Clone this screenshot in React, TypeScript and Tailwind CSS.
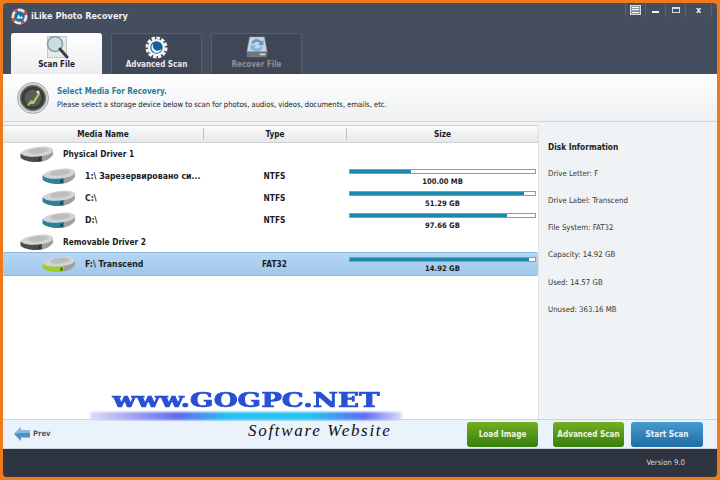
const font = 'font-["DejaVu_Sans_Condensed","DejaVu_Sans",sans-serif] [font-stretch:condensed]'

function DriveIcon({ color, dark }: { color: string; dark: string }) {
  return (
    <svg width="33" height="16" viewBox="0 0 33 16" className="shrink-0">
      <path d="M0.5 7 C4 3 12 1.5 20 0.7 C27 0 33 1.5 33 4 C33 7 28 9 22 10 C13 11.5 3 11 0.5 7 Z" fill="#d2d3d4" />
      <ellipse cx="18" cy="4.8" rx="10" ry="2.8" fill="#bcbdbe" transform="rotate(-6 18 4.8)" />
      <path d="M0.5 7 C3 11 13 11.5 22 10 L22 15.5 C14 17 4 15.5 0.5 11.5 Z" fill={color} />
      <path d="M22 10 C28 9 33 7 33 4 L33 8.5 C32 11.5 27 14.5 22 15.5 Z" fill="#9b9d9f" />
      <rect x="18.5" y="11.5" width="2" height="3.5" fill={dark} />
    </svg>
  )
}

function TabMagnifier() {
  return (
    <svg width="24" height="23" viewBox="0 0 24 23">
      <rect x="2.5" y="0.5" width="19" height="21" fill="#e6e8e8" stroke="#c4c8c8" />
      <circle cx="10" cy="8" r="7.5" fill="#c6dde3" stroke="#8b9a9f" strokeWidth="1.5" />
      <path d="M15 13 L22 21" stroke="#3c3f42" strokeWidth="3" strokeLinecap="round" />
    </svg>
  )
}

function TabGear() {
  return (
    <svg width="23" height="23" viewBox="0 0 24 24">
      <circle cx="12" cy="12" r="10" fill="none" stroke="#f2f4f6" strokeWidth="3" strokeDasharray="3.6 1.6" />
      <circle cx="12" cy="12" r="9" fill="#f2f4f6" />
      <circle cx="12" cy="12" r="6.5" fill="#12609c" />
      <path d="M9 7.5 A5.5 5.5 0 1 0 17.5 13 A4.5 4.5 0 0 1 9 7.5 Z" fill="#eaf3f8" />
    </svg>
  )
}

function TabRecover() {
  return (
    <svg width="22" height="23" viewBox="0 0 24 25">
      <path d="M4 1 H20 L23 17 H1 Z" fill="#c9d6df" stroke="#8f98a0" strokeWidth="0.6" />
      <path d="M6 8 A6 6 0 0 1 17 6 L19 4 L19 10 L13 10 L15 8 A4 4 0 0 0 8 9 Z" fill="#5f9bd0" />
      <path d="M18 11 A6 6 0 0 1 7 14 L5 16 L5 10 L11 10 L9 12 A4 4 0 0 0 16 11 Z" fill="#7fb2dd" />
      <rect x="1" y="17" width="22" height="6" rx="1" fill="#70767d" />
      <rect x="15" y="19" width="6" height="2" fill="#d6d9dc" />
    </svg>
  )
}

function AppLogo() {
  return (
    <svg width="17" height="17" viewBox="0 0 18 18">
      <circle cx="9" cy="9" r="8.5" fill="#e9e3dd" />
      <path d="M3 3 A8.5 8.5 0 0 1 7 1 L8 4 L5 5 Z M15 15 A8.5 8.5 0 0 1 11 17 L10 14 L13 13 Z" fill="#c8472f" />
      <path d="M15 3 A8.5 8.5 0 0 1 17 7 L14 8 L13 5 Z M3 15 A8.5 8.5 0 0 1 1 11 L4 10 L5 13 Z" fill="#c8472f" />
      <circle cx="9" cy="9" r="5.5" fill="#1f6fa8" />
      <path d="M6 11 L8 7 L10 10 L11 8.5 L13 11 Z" fill="#eef4f7" />
    </svg>
  )
}

function BannerIcon() {
  return (
    <svg width="32" height="34" viewBox="0 0 32 34">
      <circle cx="16" cy="17" r="15.5" fill="#d9dbdc" stroke="#a5a8aa" />
      <circle cx="16" cy="17" r="12.5" fill="#3b3d3c" stroke="#77797a" strokeWidth="1.5" />
      <circle cx="16" cy="17" r="8.5" fill="#5a5d54" />
      <path d="M10 24 L14 19 L16 20 L22 11 L23 13 L17 23 L13 23 L12 25 Z" fill="#a9c46c" />
      <circle cx="21" cy="11" r="1.6" fill="#dfe8c0" />
    </svg>
  )
}

function Tab({ label, active, dim, icon }: { label: string; active?: boolean; dim?: boolean; icon: React.ReactNode }) {
  return (
    <div
      className={
        active
          ? 'flex h-[41px] w-[91px] flex-col items-center rounded-t-[3px] bg-gradient-to-b from-[#ffffff] to-[#eceef0] pt-[1px]'
          : 'flex h-[41px] w-[91px] flex-col items-center rounded-t-[3px] border border-b-0 border-[#565f6e] bg-[#3f4756]'
      }
    >
      <div className="flex h-[25px] items-end justify-center">{icon}</div>
      <span
        className={
          active
            ? 'text-[8px] font-bold leading-[12px] text-[#1d2129]'
            : dim
              ? 'text-[8px] font-bold leading-[12px] text-[#8b919b]'
              : 'text-[8px] font-bold leading-[12px] text-[#e6e8eb]'
        }
      >
        {label}
      </span>
    </div>
  )
}

function GroupRow({ label }: { label: string }) {
  return (
    <div className="flex h-[22px] items-center pl-[17px]">
      <DriveIcon color="#4c4c4c" dark="#2c2c2c" />
      <span className="ml-[10px] text-[8.3px] font-bold text-[#1c1c1c]">{label}</span>
    </div>
  )
}

function DriveRow({
  label,
  type,
  size,
  percent,
  selected,
}: {
  label: string
  type: string
  size: string
  percent: number
  selected?: boolean
}) {
  return (
    <div
      className={
        selected
          ? 'flex h-[22px] items-center rounded-[2px] bg-gradient-to-b from-[#b6d6f2] to-[#9fc8ec] shadow-[0_0_0_1px_#8fb8dc]'
          : 'flex h-[22px] items-center'
      }
    >
      <div className="flex w-[200px] items-center pl-[39px]">
        <DriveIcon color={selected ? '#9fce22' : '#2f8197'} dark={selected ? '#3e5a10' : '#123f4c'} />
        <span className="ml-[10px] mt-[2px] whitespace-nowrap text-[8.7px] font-bold text-[#1c1c1c]">{label}</span>
      </div>
      <div className="w-[143px] text-center text-[8.3px] font-bold text-[#1c1c1c]">{type}</div>
      <div className="flex h-full flex-1 flex-col items-center pl-[3px] pr-[2px] pt-[4px]">
        <div className="h-[5px] w-full border border-[#65a9bf] bg-white">
          <div className="h-full bg-[#1d87ad]" style={{ width: `${percent}%` }} />
        </div>
        <span
          className={
            selected
              ? 'mt-[1px] text-[7.6px] font-bold leading-[11px] text-[#1c1c1c]'
              : 'mt-[2px] text-[7.6px] font-bold leading-[11px] text-[#1c1c1c]'
          }
        >
          {size}
        </span>
      </div>
    </div>
  )
}

function ActionButton({ label, blue }: { label: string; blue?: boolean }) {
  return (
    <div
      className={
        blue
          ? 'flex h-[25px] w-[72px] items-center justify-center rounded-[3px] bg-gradient-to-b from-[#479bd0] to-[#1f6ca6] text-[8.1px] font-bold text-[#eaf4fa]'
          : 'flex h-[25px] w-[71px] items-center justify-center rounded-[3px] bg-gradient-to-b from-[#74ae22] to-[#367f0e] text-[8.1px] font-bold text-[#eef6e2]'
      }
    >
      {label}
    </div>
  )
}

const diskInfo = [
  'Drive Letter: F',
  'Drive Label: Transcend',
  'File System: FAT32',
  'Capacity: 14.92 GB',
  'Used: 14.57 GB',
  'Unused: 363.16 MB',
]

export default function App() {
  return (
    <div className={`relative h-[480px] w-[720px] overflow-hidden bg-[#ee7a1c] p-[3px] ${font}`}>
      <div className="flex h-[474px] flex-col overflow-hidden rounded-[3px] bg-white">
        {/* title bar + tabs */}
        <div className="flex h-[71px] flex-col bg-[#454e5e]">
          <div className="flex h-[30px] items-start justify-between">
            <div className="flex items-center pl-[8px] pt-[5px]">
              <AppLogo />
              <span className="ml-[3px] text-[9.1px] font-bold text-[#eef0f2]">iLike Photo Recovery</span>
            </div>
            <div className="mr-[5px] flex h-[14px] border-r border-[#5a6372]">
              <div className="flex w-5 items-center justify-center border-l border-[#5a6372]">
                <div className="flex h-[10px] w-[11px] flex-col justify-around border border-[#d9dce0] bg-[#8a919c] px-[1px]">
                  <div className="h-px bg-white" />
                  <div className="h-px bg-white" />
                  <div className="h-px bg-white" />
                </div>
              </div>
              <div className="flex w-5 items-center justify-center border-l border-[#5a6372]">
                <div className="mt-[4px] h-[2px] w-[7px] bg-[#eef0f2]" />
              </div>
              <div className="flex w-5 items-center justify-center border-l border-[#5a6372]">
                <div className="h-[6px] w-[8px] border border-t-2 border-[#d9dce0]" />
              </div>
              <div className="flex w-[26px] items-center justify-center border-l border-[#5a6372]">
                <span className="text-[9px] font-bold leading-none text-[#eef0f2]">x</span>
              </div>
            </div>
          </div>
          <div className="flex gap-[9px] pl-[8px]">
            <Tab label="Scan File" active icon={<TabMagnifier />} />
            <Tab label="Advanced Scan" icon={<TabGear />} />
            <Tab label="Recover File" dim icon={<TabRecover />} />
          </div>
        </div>

        {/* banner */}
        <div className="flex h-[48px] items-center border-b border-[#d3d6d9] bg-gradient-to-b from-[#ffffff] to-[#eef0f2] pl-[14px]">
          <BannerIcon />
          <div className="ml-[8px]">
            <div className="text-[8px] font-bold leading-[13px] text-[#1f7f9c]">Select Media For Recovery.</div>
            <div className="text-[7.6px] leading-[13px] text-[#222]">
              Please select a storage device below to scan for photos, audios, videos, documents, emails, etc.
            </div>
          </div>
        </div>

        {/* list + disk info */}
        <div className="flex flex-1 bg-[#f0f3f6] pt-[3px]">
          <div className="flex w-[535px] flex-col bg-white">
            <div className="flex h-[18px] items-center border-y border-[#cfd2d5] bg-gradient-to-b from-[#fbfbfb] to-[#e6e7e8] text-[8.2px] font-bold text-[#1c1c1c]">
              <div className="w-[200px] text-center">Media Name</div>
              <div className="w-[143px] border-l border-[#bfc2c5] text-center">Type</div>
              <div className="flex-1 border-l border-[#bfc2c5] text-center">Size</div>
            </div>
            <GroupRow label="Physical Driver 1" />
            <DriveRow label="1:\ Зарезервировано си..." type="NTFS" size="100.00 MB" percent={33} />
            <DriveRow label="C:\" type="NTFS" size="51.29 GB" percent={94} />
            <DriveRow label="D:\" type="NTFS" size="97.66 GB" percent={85} />
            <GroupRow label="Removable Driver 2" />
            <DriveRow label="F:\ Transcend" type="FAT32" size="14.92 GB" percent={97} selected />
          </div>
          <div className="flex-1 border-l border-[#dfe3e6] pl-[9px] pt-[16px]">
            <div className="text-[8.3px] font-bold leading-[12px] text-[#1c1c1c]">Disk Information</div>
            <div className="mt-[7px] flex flex-col">
              {diskInfo.map((line) => (
                <div key={line} className="flex h-[27.2px] items-center text-[7.8px] text-[#333]">
                  {line}
                </div>
              ))}
            </div>
          </div>
        </div>

        {/* bottom actions */}
        <div className="flex h-[30px] items-center border-y border-[#cfd3d7] bg-[#eaf3fb] pl-[11px]">
          <svg width="16" height="14" viewBox="0 0 16 14">
            <path d="M0 7 L7 0 L7 3.5 L16 3.5 L16 10.5 L7 10.5 L7 14 Z" fill="#4d8fc4" />
            <path d="M0 7 L7 0 L7 3.5 L16 3.5 L16 6 L6 6 Z" fill="#86b9dd" />
          </svg>
          <span className="ml-[3px] text-[7.6px] font-bold text-[#4a5866]">Prev</span>
          <div className="ml-auto mr-[14px] flex">
            <ActionButton label="Load Image" />
            <div className="ml-[15px] flex gap-[7px]">
              <ActionButton label="Advanced Scan" />
              <ActionButton label="Start Scan" blue />
            </div>
          </div>
        </div>

        {/* footer */}
        <div className="flex h-[28px] items-center justify-end bg-[#2f3540] pr-[32px] text-[7.7px] text-[#d5d8dc]">
          Version 9.0
        </div>
      </div>

      {/* watermark laid over the window */}
      <div className="absolute left-[90px] top-[388px] flex w-[312px] flex-col">
        <div className='origin-center scale-x-[1.53] text-center whitespace-nowrap font-["DejaVu_Serif",serif] text-[20px] font-bold leading-[24px] text-[#2850d4] [-webkit-text-stroke:0.7px_#2850d4]'>
          www.GOGPC.NET
        </div>
        <div className="h-[8px] w-full bg-[linear-gradient(90deg,#dcdcfb_0%,#a9a9f6_12%,#5f6cf2_28%,#27c3f5_45%,#27c3f5_70%,#5f6cf2_88%,#dcdcfb_100%)] blur-[1px]" />
        <div className='mt-[3px] ml-[158px] whitespace-nowrap font-["Liberation_Serif",serif] text-[17px] italic leading-[16px] tracking-[1.7px] text-[#111]'>
          Software Website
        </div>
      </div>
    </div>
  )
}
